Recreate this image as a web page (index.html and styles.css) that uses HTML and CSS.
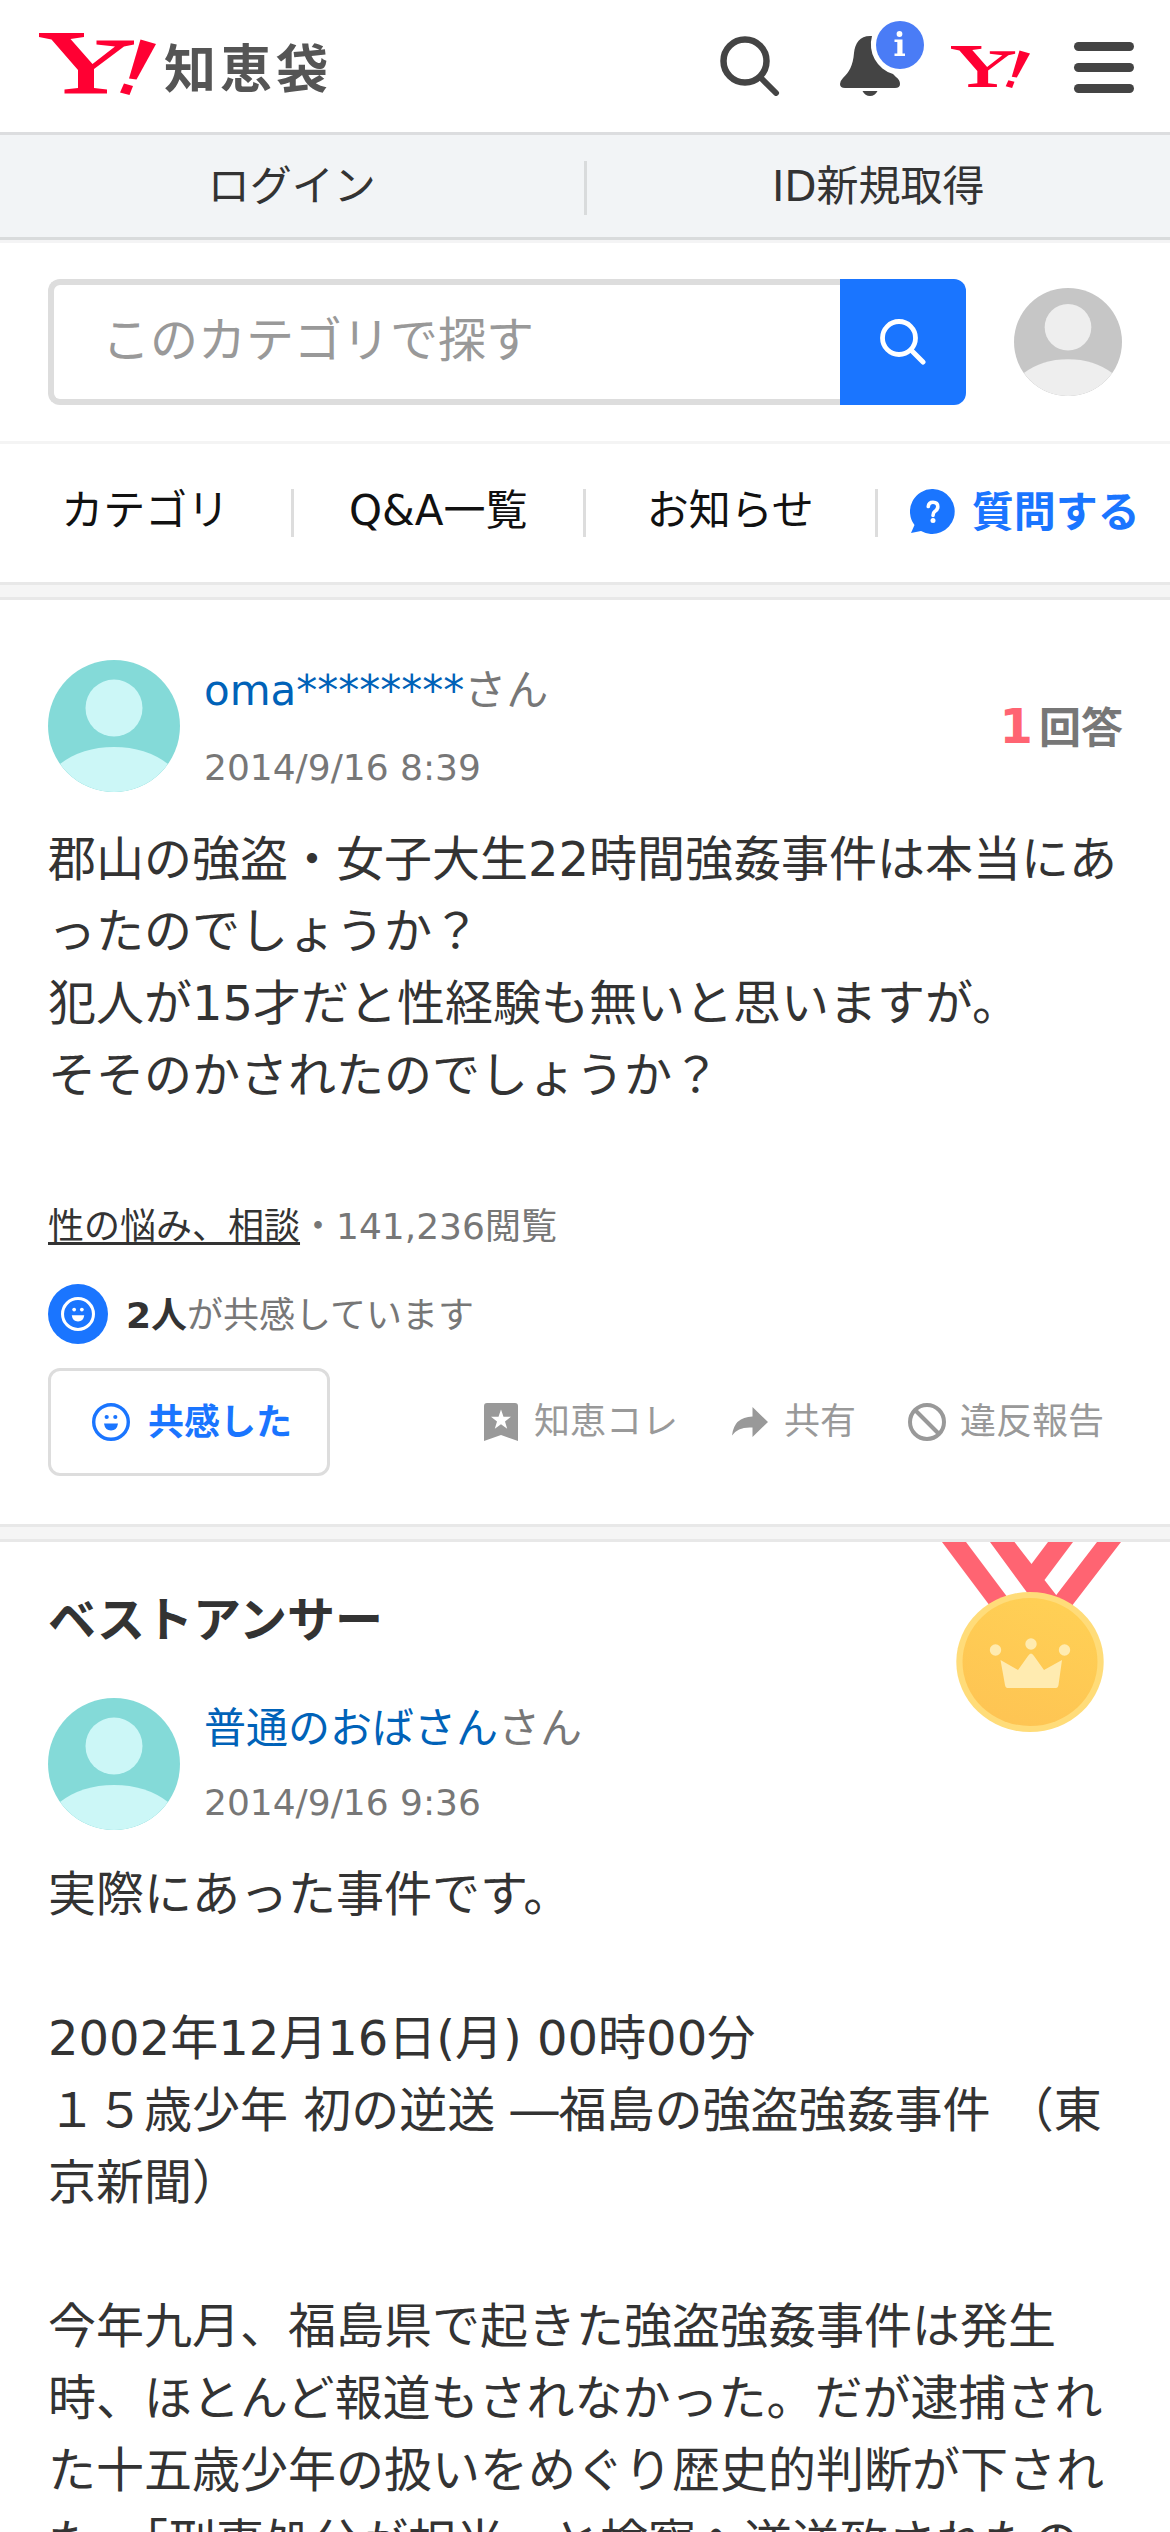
FILE: index.html
```html
<!DOCTYPE html>
<html lang="ja">
<head>
<meta charset="utf-8">
<title>Yahoo!知恵袋</title>
<link rel="stylesheet" href="styles.css">
</head>
<body>
<svg class="defs" width="0" height="0" aria-hidden="true">
  <symbol id="ylogo" viewBox="0 0 117 62">
    <path d="M0 0H45V4L31.500 6L53.500 31L76 13.500L57.500 11.500V7.500H95V11.500L85 13.500L55 36V55L68 56.500V60.500H25.500V56.500L39 55V37L12.500 6.500L0 4Z"/>
    <path d="M101.500 6.500L117 11L97.500 46.500L90 45.500Z"/>
    <path d="M85 50.500L94 53L90.500 62L81 59.500Z"/>
  </symbol>
  <symbol id="person" viewBox="0 0 132 132">
    <circle cx="66" cy="48" r="28.500"/>
    <path d="M12 104Q34 87 66 87Q98 87 120 104A66 66 0 0 1 12 104Z"/>
  </symbol>
  <symbol id="smile" viewBox="0 0 38 38">
    <circle cx="19" cy="19" r="17.300" fill="none" stroke="currentColor" stroke-width="3.400"/>
    <circle cx="14.700" cy="14" r="2.100" fill="currentColor"/>
    <circle cx="23.300" cy="14" r="2.100" fill="currentColor"/>
    <path d="M12 20.500H26Q25 27.500 19 27.500Q13 27.500 12 20.500Z" fill="currentColor"/>
  </symbol>
</svg>

<header class="header">
  <a class="logo">
    <svg class="logo-mark" aria-hidden="true"><use href="#ylogo"/></svg>
    <span class="logo-text">知恵袋</span>
  </a>
  <div class="tools">
    <svg class="tool-search" viewBox="0 0 60 60"><circle cx="25" cy="25" r="21.500" fill="none" stroke="#444" stroke-width="6.500"/><path d="M41 42L56 57" stroke="#444" stroke-width="6" stroke-linecap="round"/></svg>
    <svg class="tool-bell" viewBox="0 0 86 76">
      <path d="M30 15C20 15 15 22 14 32C13 45 9 51 3 57Q0 60 0 63Q0 67 5 67H55Q60 67 60 63Q60 59 56 56L53 53A31 31 0 0 1 32 15Z" fill="#444"/>
      <path d="M22.500 70H37.500Q35 75 30 75Q25 75 22.500 70Z" fill="#444"/>
      <circle cx="60" cy="24" r="24" fill="#4a7cf6"/>
      <circle cx="59.500" cy="13" r="2.900" fill="#fff"/>
      <path d="M54.500 18.500H62.500V32.500H65V35H54.500V32.500H57.300V21H54.500Z" fill="#fff"/>
    </svg>
    <svg class="tool-y" aria-hidden="true"><use href="#ylogo"/></svg>
    <div class="burger"><i></i><i></i><i></i></div>
  </div>
</header>

<nav class="login">
  <a>ログイン</a>
  <a>ID新規取得</a>
</nav>

<div class="search">
  <div class="search-box">
    <div class="search-field">このカテゴリで探す</div>
    <div class="search-button"><svg viewBox="0 0 46 46"><circle cx="19" cy="19" r="16.500" fill="none" stroke="#fff" stroke-width="4.800"/><path d="M31 31L43 43" stroke="#fff" stroke-width="5" stroke-linecap="round"/></svg></div>
  </div>
  <svg class="avatar avatar-gray"><use href="#person"/></svg>
</div>

<nav class="menu">
  <a>カテゴリ</a>
  <a>Q&amp;A一覧</a>
  <a>お知らせ</a>
  <a class="ask"><svg viewBox="0 0 46 46"><path d="M23 0A22.500 22.500 0 1 1 11 42L1 44L4.500 36A22.500 22.500 0 0 1 23 0Z" fill="#1a75ff"/><path d="M18.300 17.500Q18.700 13.300 23 13.300Q27.800 13.300 27.800 17.800Q27.800 20.500 25 22.300Q23 23.700 23 26.500" fill="none" stroke="#fff" stroke-width="3.600" stroke-linecap="round"/><circle cx="23" cy="31.500" r="2.500" fill="#fff"/></svg><span>質問する</span></a>
</nav>

<div class="band"></div>

<main>
  <section class="question">
    <div class="user">
      <svg class="avatar"><use href="#person"/></svg>
      <div class="who">
        <p class="name"><a>oma********</a>さん</p>
        <p class="date">2014/9/16 8:39</p>
      </div>
      <p class="count"><b>1</b><span>回答</span></p>
    </div>
    <p class="text">郡山の強盗・女子大生22時間強姦事件は本当にあったのでしょうか？<br>犯人が15才だと性経験も無いと思いますが。<br>そそのかされたのでしょうか？</p>
    <p class="meta"><a>性の悩み、相談</a><span>・141,236閲覧</span></p>
    <div class="empathy">
      <span class="empathy-icon"><svg><use href="#smile"/></svg></span>
      <p><b>2人</b>が共感しています</p>
    </div>
    <div class="actions">
      <a class="empathize"><svg><use href="#smile"/></svg><span>共感した</span></a>
      <div class="links">
        <a class="link-save"><svg viewBox="0 0 34 38"><path d="M3 0H31Q34 0 34 3V38L17 32L0 38V3Q0 0 3 0Z" fill="#999"/><path d="M17 6.500L19.500 13.700L27 13.800L21 18.400L23.200 25.700L17 21.300L10.800 25.700L13 18.400L7 13.800L14.500 13.700Z" fill="#fff"/></svg>知恵コレ</a>
        <a class="link-share"><svg viewBox="0 0 36 30"><path d="M20.500 0L36 15L20.500 30V20.500Q6 19.500 0 28.500Q2 10 20.500 9.500Z" fill="#999"/></svg>共有</a>
        <a class="link-report"><svg viewBox="0 0 38 38"><circle cx="19" cy="19" r="17" fill="none" stroke="#999" stroke-width="4"/><path d="M7.500 7.500L30.500 30.500" stroke="#999" stroke-width="4"/></svg>違反報告</a>
      </div>
    </div>
  </section>

  <div class="band"></div>

  <section class="answer">
    <svg class="medal" viewBox="0 0 179 191">
      <defs>
        <linearGradient id="gold" x1="0.700" y1="0" x2="0.300" y2="1"><stop offset="0" stop-color="#ffd055"/><stop offset="1" stop-color="#fec453"/></linearGradient>
      </defs>
      <path d="M0 0H24L66 56L48 64ZM48 0H72.500L89.500 22L106 0H131L102.500 38L118 58L92 60ZM155 0H179L129 65L112 56Z" fill="#ff6472"/>
      <ellipse cx="88" cy="120" rx="73.700" ry="70" fill="#ffdc79"/>
      <ellipse cx="88" cy="120" rx="67.500" ry="64" fill="url(#gold)"/>
      <g fill="#ffebb0">
        <circle cx="53.500" cy="108" r="5.700"/><circle cx="89" cy="102" r="5.700"/><circle cx="122.500" cy="108" r="5.700"/>
        <path d="M58.500 118L76 128L86 114Q89 109 92 114L102 128L120 118L116.500 143Q116 146 114 146H65.500Q63.500 146 63 143Z"/>
      </g>
    </svg>
    <h2>ベストアンサー</h2>
    <div class="user">
      <svg class="avatar"><use href="#person"/></svg>
      <div class="who">
        <p class="name"><a>普通のおばさん</a>さん</p>
        <p class="date">2014/9/16 9:36</p>
      </div>
    </div>
    <p class="text">実際にあった事件です。<br><br>2002年12月16日(月) 00時00分<br>１５歳少年 初の逆送 ―福島の強盗強姦事件 （東京新聞）<br><br>今年九月、福島県で起きた強盗強姦事件は発生時、ほとんど報道もされなかった。だが逮捕された十五歳少年の扱いをめぐり歴史的判断が下された。「刑事処分が相当」と検察へ逆送致されたの</p>
  </section>
</main>
</body>
</html>
```
FILE: styles.css
```css
* { box-sizing: border-box; }
body {
  margin: 0;
  width: 1170px;
  height: 2532px;
  overflow: hidden;
  background: #fff;
  color: #333;
  font-family: "DejaVu Sans", "Noto Sans CJK JP", sans-serif;
  font-size: 48px;
}
p, h2 { margin: 0; }
svg { display: block; flex: none; }
.defs { position: absolute; }

.header {
  display: flex;
  justify-content: space-between;
  height: 135px;
  border-bottom: 3px solid #dcdddf;
  padding: 0 36px 0 39px;
}
.logo { display: flex; }
.logo-mark { width: 117px; height: 62px; margin-top: 33px; fill: #ff0033; }
.logo-text {
  margin: 30px 0 0 8px;
  font: bold 52px/72px "Noto Sans CJK JP", sans-serif;
  letter-spacing: 4px;
  color: #555;
}
.tools { display: flex; }
.tool-search { width: 60px; height: 60px; margin: 36px 60px 0 0; }
.tool-bell { width: 86px; height: 76px; margin: 21px 25px 0 0; }
.tool-y { width: 79px; height: 42px; margin: 46px 44px 0 0; fill: #ff0033; }
.burger { display: flex; flex-direction: column; gap: 12px; margin-top: 42px; }
.burger i { width: 60px; height: 9px; border-radius: 4.500px; background: #444; }

.login {
  display: flex;
  align-items: center;
  height: 108px;
  background: #f2f4f6;
  border-bottom: 3px solid #f4f4f5;
  box-shadow: inset 0 -3px #d9dbdc;
}
.login a { flex: 1; height: 54px; font-size: 42px; line-height: 52px; text-align: center; }
.login a + a { border-left: 3px solid #d9dbdc; }

.search {
  display: flex;
  align-items: center;
  justify-content: space-between;
  height: 201px;
  padding: 0 48px;
  border-bottom: 3px solid #f4f4f4;
}
.search-box { display: flex; width: 918px; height: 126px; }
.search-field {
  flex: 1;
  padding: 0 48px;
  border: 6px solid #ddd;
  border-right: 0;
  border-radius: 12px 0 0 12px;
  color: #999;
  line-height: 110px;
}
.search-button {
  display: flex;
  align-items: center;
  justify-content: center;
  width: 126px;
  border-radius: 0 12px 12px 0;
  background: #1a75ff;
}
.search-button svg { width: 46px; height: 46px; }

.avatar { width: 132px; height: 132px; border-radius: 50%; background: #84dad8; fill: #ccf7f7; }
.avatar-gray { width: 108px; height: 108px; background: #c6c6c6; fill: #eee; }

.menu { display: flex; height: 138px; padding-top: 45px; color: #111; }
.menu a {
  width: 292.500px;
  height: 48px;
  border-right: 3px solid #ddd;
  font-size: 42px;
  line-height: 43px;
  text-align: center;
}
.menu a:first-child { width: 294px; }
.menu .ask {
  display: flex;
  gap: 16px;
  border: 0;
  padding-left: 32px;
  color: #1a75ff;
  font-weight: bold;
  line-height: 48px;
  white-space: nowrap;
}
.ask svg { width: 46px; height: 46px; }

.band { height: 18px; background: #f5f5f5; border: solid #e8e8e8; border-width: 3px 0; }

.question { height: 924px; padding: 60px 48px 0; }
.user { display: flex; height: 132px; }
.who { flex: 1; padding-left: 24px; }
.name { font-size: 42px; line-height: 61px; color: #777; }
.name a { color: #0062b8; }
.date { margin-top: 20px; font-size: 36px; line-height: 54px; color: #777; }
.count { display: flex; align-items: baseline; gap: 6px; margin: 30px -1px 0 0; font-weight: bold; line-height: 72px; height: 72px; }
.count b { color: #ff6472; }
.count span { font-size: 42px; color: #777; }
.text { margin-top: 31px; line-height: 72px; }
.meta { margin-top: 89px; font-size: 36px; line-height: 54px; color: #777; }
.meta a {
  color: #333;
  text-decoration: underline 3px;
  text-underline-offset: 3px;
  text-decoration-skip-ink: none;
}
.empathy { display: flex; align-items: center; gap: 18px; height: 60px; margin-top: 30px; font-size: 36px; color: #777; }
.empathy p { padding-bottom: 5px; }
.empathy b { color: #333; }
.empathy-icon { display: flex; align-items: center; justify-content: center; width: 60px; height: 60px; border-radius: 50%; background: #1a75ff; color: #fff; }
.empathy-icon svg { width: 34px; height: 34px; }
.actions { display: flex; justify-content: space-between; align-items: center; margin-top: 24px; font-size: 36px; }
.empathize {
  display: flex;
  align-items: center;
  gap: 18px;
  width: 282px;
  height: 108px;
  padding-left: 41px;
  border: 3px solid #ddd;
  border-radius: 12px;
  color: #1a75ff;
  font-weight: bold;
}
.empathize span { padding-bottom: 7px; }
.empathize svg { width: 38px; height: 38px; }
.links { display: flex; padding-right: 18px; color: #999; line-height: 54px; }
.links a { display: flex; align-items: center; }
.link-save svg { width: 34px; height: 38px; margin-right: 16px; }
.link-share { margin-left: 54px; }
.link-share svg { width: 36px; height: 30px; margin-right: 16px; }
.link-report { margin-left: 52px; }
.link-report svg { width: 38px; height: 38px; margin-right: 14px; }

.answer { position: relative; padding: 42px 48px 0; }
.answer h2 { font-size: 48px; line-height: 72px; }
.answer .user { margin-top: 42px; }
.answer .date { margin-top: 17px; }
.answer .text { margin-top: 28px; }
.medal { position: absolute; top: 0; left: 942px; width: 179px; height: 191px; }
```
